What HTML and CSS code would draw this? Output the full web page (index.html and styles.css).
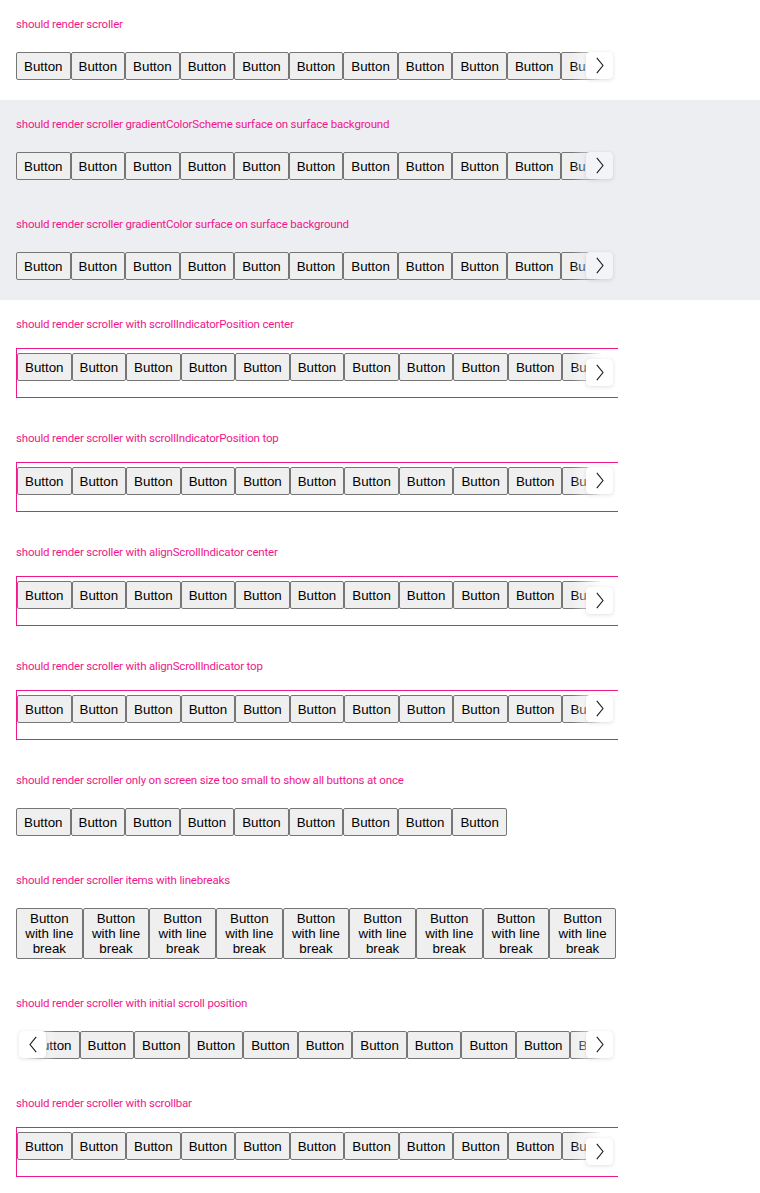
FILE: index.html
```html
<!DOCTYPE html>
<html>
<head>
<meta charset="utf-8">
<link rel="stylesheet" href="styles.css">
</head>
<body>

<section class="story">
  <h2 class="title">should render scroller</h2>
  <div class="scroller">
    <div class="row">
      <button class="btn">Button</button><button class="btn">Button</button><button class="btn">Button</button><button class="btn">Button</button><button class="btn">Button</button><button class="btn">Button</button><button class="btn">Button</button><button class="btn">Button</button><button class="btn">Button</button><button class="btn">Button</button><button class="btn">Button</button>
    </div>
    <div class="fade fade-right"></div>
    <div class="arrow arrow-right arrow-top"><svg width="8" height="17" viewBox="0 0 8 17"><polyline points="0.8,0.8 7,8.5 0.8,16.2" fill="none" stroke="#1a1a1a" stroke-width="1.1"/></svg></div>
  </div>
</section>

<section class="story surface">
  <h2 class="title">should render scroller gradientColorScheme surface on surface background</h2>
  <div class="scroller">
    <div class="row">
      <button class="btn">Button</button><button class="btn">Button</button><button class="btn">Button</button><button class="btn">Button</button><button class="btn">Button</button><button class="btn">Button</button><button class="btn">Button</button><button class="btn">Button</button><button class="btn">Button</button><button class="btn">Button</button><button class="btn">Button</button>
    </div>
    <div class="fade fade-right"></div>
    <div class="arrow arrow-right arrow-top"><svg width="8" height="17" viewBox="0 0 8 17"><polyline points="0.8,0.8 7,8.5 0.8,16.2" fill="none" stroke="#1a1a1a" stroke-width="1.1"/></svg></div>
  </div>
</section>

<section class="story surface">
  <h2 class="title">should render scroller gradientColor surface on surface background</h2>
  <div class="scroller">
    <div class="row">
      <button class="btn">Button</button><button class="btn">Button</button><button class="btn">Button</button><button class="btn">Button</button><button class="btn">Button</button><button class="btn">Button</button><button class="btn">Button</button><button class="btn">Button</button><button class="btn">Button</button><button class="btn">Button</button><button class="btn">Button</button>
    </div>
    <div class="fade fade-right"></div>
    <div class="arrow arrow-right arrow-top"><svg width="8" height="17" viewBox="0 0 8 17"><polyline points="0.8,0.8 7,8.5 0.8,16.2" fill="none" stroke="#1a1a1a" stroke-width="1.1"/></svg></div>
  </div>
</section>

<section class="story">
  <h2 class="title">should render scroller with scrollIndicatorPosition center</h2>
  <div class="scroller boxed">
    <div class="row">
      <button class="btn">Button</button><button class="btn">Button</button><button class="btn">Button</button><button class="btn">Button</button><button class="btn">Button</button><button class="btn">Button</button><button class="btn">Button</button><button class="btn">Button</button><button class="btn">Button</button><button class="btn">Button</button><button class="btn">Button</button>
    </div>
    <div class="fade fade-right"></div>
    <div class="arrow arrow-right arrow-center"><svg width="8" height="17" viewBox="0 0 8 17"><polyline points="0.8,0.8 7,8.5 0.8,16.2" fill="none" stroke="#1a1a1a" stroke-width="1.1"/></svg></div>
  </div>
</section>

<section class="story">
  <h2 class="title">should render scroller with scrollIndicatorPosition top</h2>
  <div class="scroller boxed">
    <div class="row">
      <button class="btn">Button</button><button class="btn">Button</button><button class="btn">Button</button><button class="btn">Button</button><button class="btn">Button</button><button class="btn">Button</button><button class="btn">Button</button><button class="btn">Button</button><button class="btn">Button</button><button class="btn">Button</button><button class="btn">Button</button>
    </div>
    <div class="fade fade-right"></div>
    <div class="arrow arrow-right arrow-top"><svg width="8" height="17" viewBox="0 0 8 17"><polyline points="0.8,0.8 7,8.5 0.8,16.2" fill="none" stroke="#1a1a1a" stroke-width="1.1"/></svg></div>
  </div>
</section>

<section class="story">
  <h2 class="title">should render scroller with alignScrollIndicator center</h2>
  <div class="scroller boxed">
    <div class="row">
      <button class="btn">Button</button><button class="btn">Button</button><button class="btn">Button</button><button class="btn">Button</button><button class="btn">Button</button><button class="btn">Button</button><button class="btn">Button</button><button class="btn">Button</button><button class="btn">Button</button><button class="btn">Button</button><button class="btn">Button</button>
    </div>
    <div class="fade fade-right"></div>
    <div class="arrow arrow-right arrow-center"><svg width="8" height="17" viewBox="0 0 8 17"><polyline points="0.8,0.8 7,8.5 0.8,16.2" fill="none" stroke="#1a1a1a" stroke-width="1.1"/></svg></div>
  </div>
</section>

<section class="story">
  <h2 class="title">should render scroller with alignScrollIndicator top</h2>
  <div class="scroller boxed">
    <div class="row">
      <button class="btn">Button</button><button class="btn">Button</button><button class="btn">Button</button><button class="btn">Button</button><button class="btn">Button</button><button class="btn">Button</button><button class="btn">Button</button><button class="btn">Button</button><button class="btn">Button</button><button class="btn">Button</button><button class="btn">Button</button>
    </div>
    <div class="fade fade-right"></div>
    <div class="arrow arrow-right arrow-top"><svg width="8" height="17" viewBox="0 0 8 17"><polyline points="0.8,0.8 7,8.5 0.8,16.2" fill="none" stroke="#1a1a1a" stroke-width="1.1"/></svg></div>
  </div>
</section>

<section class="story">
  <h2 class="title">should render scroller only on screen size too small to show all buttons at once</h2>
  <div class="scroller">
    <div class="row">
      <button class="btn">Button</button><button class="btn">Button</button><button class="btn">Button</button><button class="btn">Button</button><button class="btn">Button</button><button class="btn">Button</button><button class="btn">Button</button><button class="btn">Button</button><button class="btn">Button</button>
    </div>
  </div>
</section>

<section class="story">
  <h2 class="title">should render scroller items with linebreaks</h2>
  <div class="scroller tall">
    <div class="row">
      <button class="btn multi">Button with line break</button><button class="btn multi">Button with line break</button><button class="btn multi">Button with line break</button><button class="btn multi">Button with line break</button><button class="btn multi">Button with line break</button><button class="btn multi">Button with line break</button><button class="btn multi">Button with line break</button><button class="btn multi">Button with line break</button><button class="btn multi">Button with line break</button>
    </div>
  </div>
</section>

<section class="story">
  <h2 class="title">should render scroller with initial scroll position</h2>
  <div class="scroller">
    <div class="row shifted">
      <button class="btn">Button</button><button class="btn">Button</button><button class="btn">Button</button><button class="btn">Button</button><button class="btn">Button</button><button class="btn">Button</button><button class="btn">Button</button><button class="btn">Button</button><button class="btn">Button</button><button class="btn">Button</button><button class="btn">Button</button>
    </div>
    <div class="fade fade-left"></div>
    <div class="arrow arrow-left arrow-top"><svg width="8" height="17" viewBox="0 0 8 17"><polyline points="7.2,0.8 1,8.5 7.2,16.2" fill="none" stroke="#1a1a1a" stroke-width="1.1"/></svg></div>
    <div class="fade fade-right"></div>
    <div class="arrow arrow-right arrow-top"><svg width="8" height="17" viewBox="0 0 8 17"><polyline points="0.8,0.8 7,8.5 0.8,16.2" fill="none" stroke="#1a1a1a" stroke-width="1.1"/></svg></div>
  </div>
</section>

<section class="story">
  <h2 class="title">should render scroller with scrollbar</h2>
  <div class="scroller boxed">
    <div class="row">
      <button class="btn">Button</button><button class="btn">Button</button><button class="btn">Button</button><button class="btn">Button</button><button class="btn">Button</button><button class="btn">Button</button><button class="btn">Button</button><button class="btn">Button</button><button class="btn">Button</button><button class="btn">Button</button><button class="btn">Button</button>
    </div>
    <div class="fade fade-right"></div>
    <div class="arrow arrow-right arrow-center"><svg width="8" height="17" viewBox="0 0 8 17"><polyline points="0.8,0.8 7,8.5 0.8,16.2" fill="none" stroke="#1a1a1a" stroke-width="1.1"/></svg></div>
  </div>
</section>

</body>
</html>
```

FILE: styles.css
```css
html, body {
  margin: 0;
  padding: 0;
  background: #ffffff;
}

.story {
  --bg: #ffffff;
  --arrow-bg: #ffffff;
  background: var(--bg);
  padding: 16px 16px 16px 16px;
}

.story.surface {
  --bg: #edeef2;
  --arrow-bg: #f3f4f7;
}

.title {
  margin: 0 0 18px 0;
  padding-top: 1px;
  height: 14px;
  box-sizing: border-box;
  font-family: "Liberation Sans Narrow", "Roboto", sans-serif;
  font-weight: 400;
  font-size: 11.5px;
  letter-spacing: -0.18px;
  line-height: 14px;
  color: #f0168c;
  white-space: nowrap;
}

.scroller {
  position: relative;
  width: 602px;
  height: 36px;
  padding-top: 4px;
  box-sizing: border-box;
  overflow: hidden;
}

.scroller.tall {
  height: 59px;
}

.scroller.boxed {
  height: 50px;
  border-top: 1px solid #f0168c;
  border-bottom: 1px solid #f0168c;
  border-left: 1px solid #f0168c;
}

.row {
  display: flex;
  flex-wrap: nowrap;
  align-items: flex-start;
}

.row.shifted {
  margin-left: 9px;
}

.btn {
  flex: 0 0 auto;
  box-sizing: border-box;
  height: 28px;
  margin: 0;
  padding: 0 7px;
  font-family: "Liberation Sans", Arial, sans-serif;
  font-size: 13.3333px;
  line-height: normal;
  color: #000000;
  background: #efefef;
  border: 1px solid #767676;
  border-radius: 2px;
  white-space: nowrap;
  appearance: none;
  -webkit-appearance: none;
}

.btn.multi {
  width: 66.667px;
  height: 51px;
  padding: 0 4px;
  white-space: normal;
  text-align: center;
}

.fade {
  position: absolute;
  top: 0;
  bottom: 0;
  width: 46px;
}

.fade-right {
  right: 0;
  background: linear-gradient(90deg, rgba(255, 255, 255, 0) 0, var(--bg) 30px);
}

.story.surface .fade-right {
  background: linear-gradient(90deg, rgba(237, 238, 242, 0) 0, var(--bg) 30px);
}

.fade-left {
  left: 0;
  width: 40px;
  background: linear-gradient(270deg, rgba(255, 255, 255, 0) 0, var(--bg) 30px);
}

.arrow {
  position: absolute;
  width: 27px;
  height: 27px;
  box-sizing: border-box;
  display: flex;
  align-items: center;
  justify-content: center;
  background: var(--arrow-bg);
  border-radius: 4px;
  box-shadow: 0 1px 4px rgba(0, 0, 0, 0.12), 0 0 1px rgba(0, 0, 0, 0.06);
}

.arrow svg {
  display: block;
}

.arrow-right {
  right: 5px;
}

.arrow-left {
  left: 3px;
}

.arrow-top {
  top: 4px;
}

.arrow-center {
  top: 10px;
}
```
